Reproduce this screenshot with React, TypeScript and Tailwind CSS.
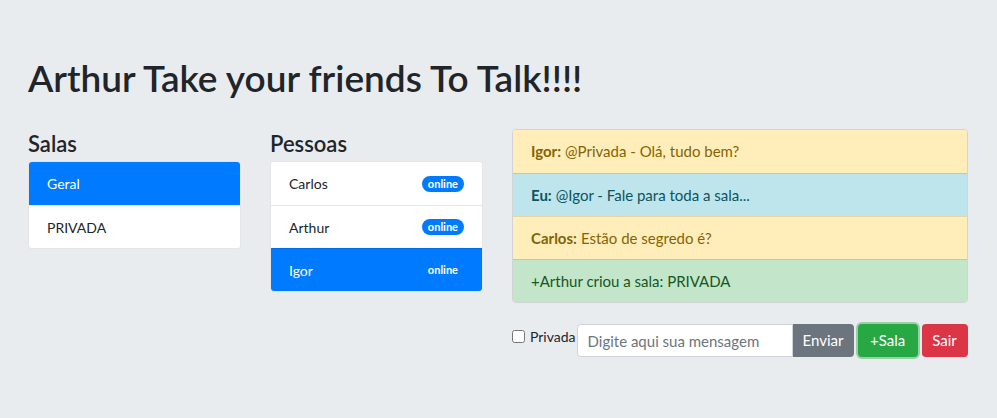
import React, { useState } from 'react';

const salas = ['Geral', 'PRIVADA'];
const pessoas = ['Carlos', 'Arthur', 'Igor'];

const mensagens = [
  { autor: 'Igor:', texto: '@Privada - Olá, tudo bem?', cls: 'bg-[#ffeeba] text-[#856404]' },
  { autor: 'Eu:', texto: '@Igor - Fale para toda a sala...', cls: 'bg-[#bee5eb] text-[#0c5460]' },
  { autor: 'Carlos:', texto: 'Estão de segredo é?', cls: 'bg-[#ffeeba] text-[#856404]' },
  { autor: '', texto: '+Arthur criou a sala: PRIVADA', cls: 'bg-[#c3e6cb] text-[#155724]' },
];

const App: React.FC = () => {
  const [sala, setSala] = useState('Geral');
  const [pessoa, setPessoa] = useState('Igor');
  const [mensagem, setMensagem] = useState('');

  return (
    <div className="min-h-screen bg-[#e9ecef] pl-[28px] pr-[29px] pt-[55px] text-[#212529] font-['Lato',sans-serif]">
      <h1 className="text-[37px] font-semibold leading-[46px] mb-[26px]">Arthur Take your friends To Talk!!!!</h1>

      <div className="grid grid-cols-[213px_213px_456px] gap-x-[29px]">
        <div>
          <h3 className="text-[22px] font-semibold leading-[33px] mb-[1px]">Salas</h3>
          <div className="rounded-[4px] overflow-hidden border border-black/10 bg-white">
            {salas.map((s, i) => (
              <div
                key={s}
                onClick={() => setSala(s)}
                className={`h-[43px] px-[18px] flex items-center text-[14px] cursor-pointer ${
                  i > 0 ? 'border-t border-black/10' : ''
                } ${sala === s ? 'bg-[#007bff] text-white' : 'bg-white'}`}
              >
                {s}
              </div>
            ))}
          </div>
        </div>

        <div>
          <h3 className="text-[22px] font-semibold leading-[33px] mb-[1px]">Pessoas</h3>
          <div className="rounded-[4px] overflow-hidden border border-black/10 bg-white">
            {pessoas.map((p, i) => (
              <div
                key={p}
                onClick={() => setPessoa(p)}
                className={`h-[43px] pl-[18px] pr-[18px] flex items-center justify-between text-[14px] cursor-pointer ${
                  i > 0 ? 'border-t border-black/10' : ''
                } ${pessoa === p ? 'bg-[#007bff] text-white' : 'bg-white'}`}
              >
                {p}
                <span className="bg-[#007bff] text-white text-[11px] font-bold leading-none px-[6px] pt-[2px] pb-[3px] rounded-full">
                  online
                </span>
              </div>
            ))}
          </div>
        </div>

        <div className="pt-[2px]">
          <div className="rounded-[4px] overflow-hidden border border-black/10">
            {mensagens.map((m, i) => (
              <div
                key={i}
                className={`h-[43px] px-[18px] flex items-center text-[15px] ${m.cls} ${
                  i > 0 ? 'border-t border-black/10' : ''
                }`}
              >
                {m.autor && <b className="font-bold mr-[4px]">{m.autor}</b>}
                {m.texto}
              </div>
            ))}
          </div>

          <div className="flex items-start mt-[21px]">
            <label className="flex items-center text-[14px] mt-[2px]">
              <input type="checkbox" className="w-[13px] h-[13px] mr-[5px]" />
              Privada
            </label>
            <input
              value={mensagem}
              onChange={(e) => setMensagem(e.target.value)}
              placeholder="Digite aqui sua mensagem"
              className="ml-[1px] w-[216px] h-[33px] px-[10px] text-[15px] border border-[#ced4da] rounded-l-[4px] bg-white outline-none placeholder:text-[#6c757d]"
            />
            <button className="h-[33px] w-[61px] bg-[#6c757d] text-white text-[15px] rounded-r-[4px]">Enviar</button>
            <button className="ml-[4px] h-[33px] w-[60px] bg-[#28a745] text-white text-[15px] rounded-[4px] shadow-[0_0_0_2px_rgba(72,180,97,0.5)]">
              +Sala
            </button>
            <button className="ml-[4px] h-[33px] w-[46px] bg-[#dc3545] text-white text-[15px] rounded-[4px]">Sair</button>
          </div>
        </div>
      </div>
    </div>
  );
};

export default App;
